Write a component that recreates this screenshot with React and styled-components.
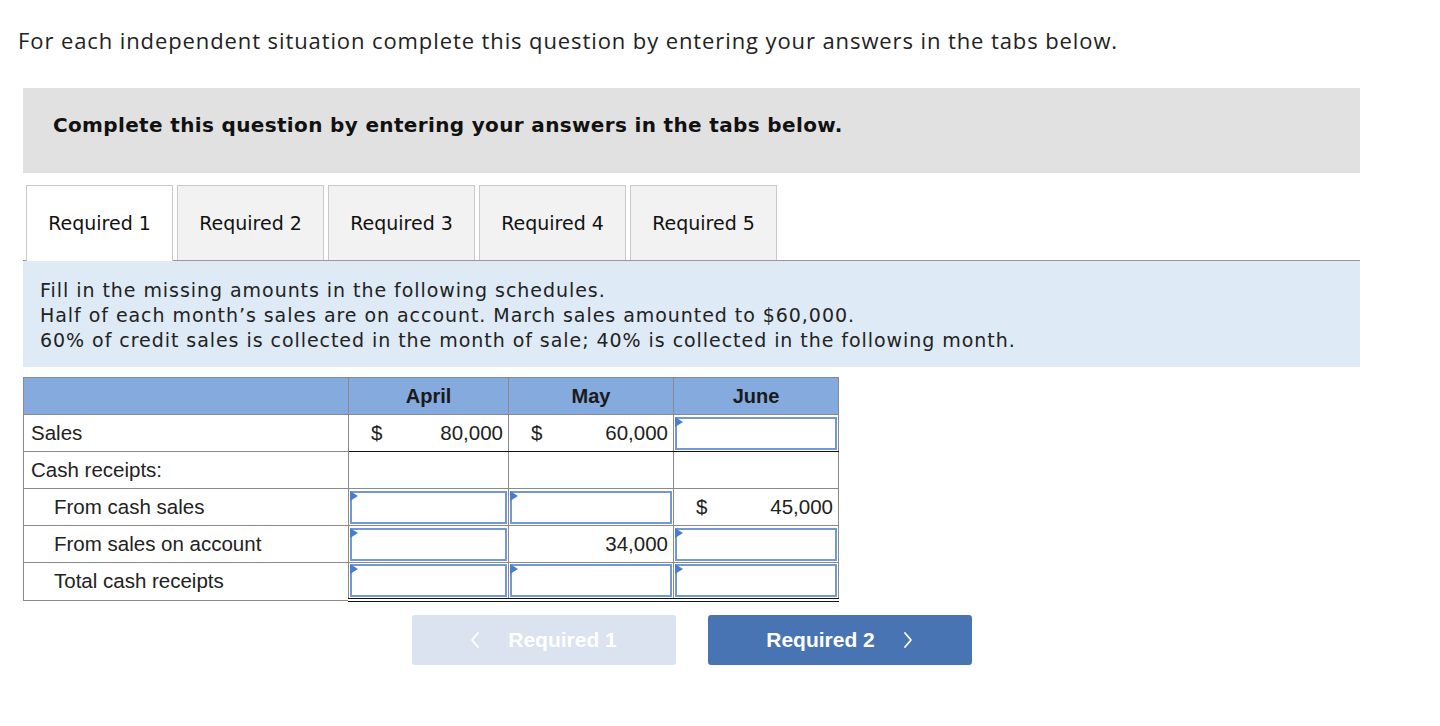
import styled, { createGlobalStyle } from "styled-components";

const GlobalStyle = createGlobalStyle`
  body {
    margin: 0;
    background: #fff;
    color: #222;
    font-family: "Liberation Sans", Arial, sans-serif;
  }
`;

const tabs = ["Required 1", "Required 2", "Required 3", "Required 4", "Required 5"];

// each cell: null = empty, "input" = blue entry box, or { dollar, value }
const rows = [
  { label: "Sales", cells: [{ dollar: true, value: "80,000" }, { dollar: true, value: "60,000" }, "input"], underline: true },
  { label: "Cash receipts:", cells: [null, null, null] },
  { label: "From cash sales", indent: true, cells: ["input", "input", { dollar: true, value: "45,000" }] },
  { label: "From sales on account", indent: true, cells: ["input", { value: "34,000" }, "input"] },
  { label: "Total cash receipts", indent: true, cells: ["input", "input", "input"], total: true },
];

function Cell({ cell, underline, total }) {
  return (
    <AmountCell $underline={underline} $total={total}>
      {cell === "input" && (
        <InputBox>
          <Flag />
        </InputBox>
      )}
      {cell && cell !== "input" && (
        <Amount>
          <span>{cell.dollar ? "$" : ""}</span>
          <span>{cell.value}</span>
        </Amount>
      )}
    </AmountCell>
  );
}

function App() {
  return (
    <Page>
      <GlobalStyle />
      <Intro>For each independent situation complete this question by entering your answers in the tabs below.</Intro>
      <Banner>Complete this question by entering your answers in the tabs below.</Banner>

      <TabBar>
        {tabs.map((t, i) => (
          <Tab key={t} $active={i === 0}>{t}</Tab>
        ))}
      </TabBar>

      <Info>
        Fill in the missing amounts in the following schedules.
        <br />
        Half of each month’s sales are on account. March sales amounted to $60,000.
        <br />
        60% of credit sales is collected in the month of sale; 40% is collected in the following month.
      </Info>

      <Table>
        <colgroup>
          <col style={{ width: 325 }} />
          <col style={{ width: 160 }} />
          <col style={{ width: 165 }} />
          <col style={{ width: 165 }} />
        </colgroup>
        <thead>
          <tr>
            <HeadCell />
            <HeadCell>April</HeadCell>
            <HeadCell>May</HeadCell>
            <HeadCell>June</HeadCell>
          </tr>
        </thead>
        <tbody>
          {rows.map((r) => (
            <tr key={r.label}>
              <LabelCell $indent={r.indent}>{r.label}</LabelCell>
              {r.cells.map((c, i) => (
                <Cell key={i} cell={c} underline={r.underline} total={r.total} />
              ))}
            </tr>
          ))}
        </tbody>
      </Table>

      <NavRow>
        <NavButton disabled>
          <Chevron viewBox="0 0 10 18"><path d="M8 2 L2 9 L8 16" /></Chevron>
          Required 1
        </NavButton>
        <NavButton $primary>
          Required 2
          <Chevron viewBox="0 0 10 18"><path d="M2 2 L8 9 L2 16" /></Chevron>
        </NavButton>
      </NavRow>
    </Page>
  );
}

const Page = styled.div`
  width: 1440px;
  height: 726px;
  padding: 26px 0 0 18px;
  box-sizing: border-box;
  overflow: hidden;
`;

const Intro = styled.div`
  font-family: "Open Sans", sans-serif;
  font-size: 22px;
  letter-spacing: 0.9px;
  line-height: 28px;
  color: #222;
`;

const Banner = styled.div`
  margin: 34px 0 0 5px;
  width: 1337px;
  height: 85px;
  box-sizing: border-box;
  padding: 24px 30px;
  background: #e1e1e1;
  font-family: "DejaVu Sans", Verdana, sans-serif;
  font-size: 20px;
  letter-spacing: 0.35px;
  line-height: 26px;
  font-weight: 700;
  color: #111;
`;

const TabBar = styled.div`
  margin: 12px 0 0 5px;
  width: 1337px;
  display: flex;
  gap: 4px;
  padding-left: 3px;
  box-sizing: border-box;
  border-bottom: 1px solid #999;
`;

const Tab = styled.div`
  width: 147px;
  box-sizing: border-box;
  display: flex;
  align-items: center;
  justify-content: center;
  border: 1px solid #c9c9c9;
  border-bottom: none;
  background: ${(p) => (p.$active ? "#fff" : "#f2f2f2")};
  margin-bottom: ${(p) => (p.$active ? "-1px" : "0")};
  height: ${(p) => (p.$active ? "76px" : "75px")};
  padding-bottom: ${(p) => (p.$active ? "1px" : "0")};
  font-family: "DejaVu Sans", Verdana, sans-serif;
  font-size: 19px;
  color: #111;
`;

const Info = styled.div`
  margin-left: 5px;
  width: 1337px;
  height: 106px;
  box-sizing: border-box;
  padding: 17px 17px;
  background: #deeaf6;
  font-family: "DejaVu Sans", Verdana, sans-serif;
  font-size: 19px;
  letter-spacing: 0.95px;
  line-height: 25px;
  color: #222;
`;

const Table = styled.table`
  margin: 10px 0 0 5px;
  width: 815px;
  table-layout: fixed;
  border-collapse: collapse;
  font-size: 20.5px;
  color: #222;
`;

const HeadCell = styled.th`
  height: 36px;
  padding: 0;
  background: #85aade;
  border: 1px solid #8a8a8a;
  font-weight: 700;
  font-size: 20px;
  text-align: center;
  color: #1a1a1a;
`;

const LabelCell = styled.td`
  height: 36px;
  padding: 0 0 0 ${(p) => (p.$indent ? "30px" : "7px")};
  border: 1px solid #8a8a8a;
  white-space: nowrap;
`;

const AmountCell = styled.td`
  height: 36px;
  padding: 1px;
  box-sizing: border-box;
  border-left: 1px solid #8a8a8a;
  border-right: 1px solid #8a8a8a;
  border-top: 1px solid #8a8a8a;
  border-bottom: ${(p) =>
    p.$total ? "4px double #111" : p.$underline ? "1px solid #111" : "1px solid #8a8a8a"};
`;

const Amount = styled.div`
  display: flex;
  justify-content: space-between;
  padding: 0 4px 0 21px;
`;

const InputBox = styled.div`
  position: relative;
  height: 33px;
  box-sizing: border-box;
  border: 2px solid #7498d2;
  background: #fff;
`;

const Flag = styled.span`
  position: absolute;
  left: -2px;
  top: -2px;
  width: 0;
  height: 0;
  border-top: 5px solid transparent;
  border-bottom: 5px solid transparent;
  border-left: 8px solid #4a7ec8;
`;

const NavRow = styled.div`
  margin: 13px 0 0 5px;
  width: 1337px;
  display: flex;
  justify-content: center;
  gap: 32px;
`;

const NavButton = styled.button`
  width: 264px;
  height: 50px;
  display: flex;
  align-items: center;
  justify-content: center;
  gap: 28px;
  border: none;
  border-radius: 3px;
  background: ${(p) => (p.$primary ? "#4874b4" : "#dae3ef")};
  color: #fff;
  font-family: "Liberation Sans", Arial, sans-serif;
  font-size: 21px;
  font-weight: 700;
  cursor: pointer;
`;

const Chevron = styled.svg`
  width: 10px;
  height: 18px;
  fill: none;
  stroke: #fff;
  stroke-width: 1.8;
  stroke-linecap: round;
  stroke-linejoin: round;
`;

export default App;
